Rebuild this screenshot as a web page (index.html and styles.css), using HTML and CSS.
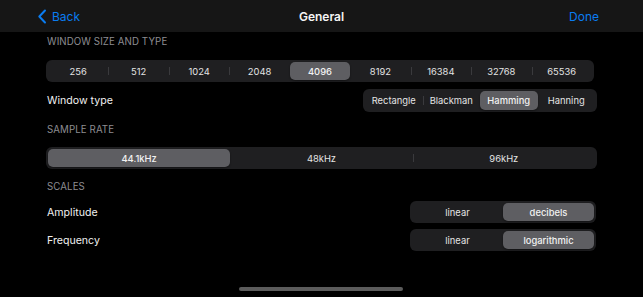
FILE: index.html
```html
<!DOCTYPE html>
<html>
<head>
<meta charset="utf-8">
<link rel="stylesheet" href="styles.css">
</head>
<body>
<div class="screen">
  <header class="nav">
    <a class="nav-back">
      <svg class="chev" width="10" height="15" viewBox="0 0 10 15"><path d="M8 1.5 L2.3 7.5 L8 13.5" fill="none" stroke="currentColor" stroke-width="2" stroke-linecap="round" stroke-linejoin="round"/></svg>
      <span>Back</span>
    </a>
    <div class="nav-title">General</div>
    <a class="nav-done">Done</a>
  </header>

  <main class="content">
    <div class="section-title first">WINDOW SIZE AND TYPE</div>
    <div class="seg-control wide-1">
      <div class="seg">256</div>
      <div class="seg">512</div>
      <div class="seg">1024</div>
      <div class="seg">2048</div>
      <div class="seg selected">4096</div>
      <div class="seg after-sel">8192</div>
      <div class="seg">16384</div>
      <div class="seg">32768</div>
      <div class="seg">65536</div>
    </div>
    <div class="row row-type">
      <div class="label">Window type</div>
      <div class="seg-control type-ctl">
        <div class="seg">Rectangle</div>
        <div class="seg">Blackman</div>
        <div class="seg selected">Hamming</div>
        <div class="seg after-sel">Hanning</div>
      </div>
    </div>

    <div class="section-title">SAMPLE RATE</div>
    <div class="seg-control">
      <div class="seg selected">44.1kHz</div>
      <div class="seg after-sel">48kHz</div>
      <div class="seg">96kHz</div>
    </div>

    <div class="section-title scales">SCALES</div>
    <div class="row row-scale">
      <div class="label">Amplitude</div>
      <div class="seg-control scale-ctl">
        <div class="seg">linear</div>
        <div class="seg selected">decibels</div>
      </div>
    </div>
    <div class="row row-scale">
      <div class="label">Frequency</div>
      <div class="seg-control scale-ctl">
        <div class="seg">linear</div>
        <div class="seg selected">logarithmic</div>
      </div>
    </div>
  </main>
  <div class="home-indicator"></div>
</div>
</body>
</html>
```

FILE: styles.css
```css
* { box-sizing: border-box; }
html, body {
  margin: 0;
  padding: 0;
  background: #000;
}
body {
  font-family: Inter, "Noto Sans", "Liberation Sans", sans-serif;
  color: #f2f2f2;
  width: 643px;
  height: 297px;
  overflow: hidden;
}
.screen {
  position: relative;
  width: 643px;
  height: 297px;
}
.nav {
  height: 32px;
  background: #161616;
  display: flex;
  align-items: center;
  justify-content: space-between;
  padding: 0 44px 0 37px;
  position: relative;
}
.nav-back {
  display: flex;
  align-items: center;
  gap: 5px;
  color: #0a7cf0;
  font-size: 12px;
}
.chev { display: block; }
.nav-title {
  position: absolute;
  left: 0;
  right: 0;
  text-align: center;
  font-size: 12px;
  font-weight: 600;
  color: #f4f4f4;
  pointer-events: none;
}
.nav-done {
  color: #0a7cf0;
  font-size: 12px;
}
.content {
  padding: 0 46px 0 46px;
}
.section-title {
  font-size: 9.7px;
  letter-spacing: 0.1px;
  color: #8d8d92;
  line-height: 16px;
  margin-top: 10px;
  margin-bottom: 9px;
  padding-left: 1px;
}
.section-title.first {
  margin-top: 2px;
  margin-bottom: 10px;
}
.section-title.scales {
  margin-bottom: 6px;
}
.seg-control {
  display: flex;
  height: 22px;
  padding: 2px;
  background: #1f1f21;
  border-radius: 6px;
}
.seg-control.wide-1 {
  margin-right: 3px;
}
.seg {
  flex: 1 1 0;
  position: relative;
  display: flex;
  align-items: center;
  justify-content: center;
  font-size: 9.4px;
  color: #e4e4e4;
  border-radius: 5px;
}
.seg + .seg::before {
  content: "";
  position: absolute;
  left: 0;
  top: 5px;
  bottom: 5px;
  width: 1px;
  background: #3a3a3d;
}
.seg.selected::before,
.seg.after-sel::before,
.scale-ctl .seg + .seg::before {
  display: none;
}
.seg.selected {
  background: #5e5e62;
  color: #f2f2f2;
  font-weight: 500;
  box-shadow: 0 1px 2px rgba(0,0,0,0.4);
}
.row {
  display: flex;
  align-items: center;
  justify-content: space-between;
}
.label {
  font-size: 10.6px;
  color: #f0f0f0;
  padding-left: 1px;
}
.row-type {
  margin-top: 7px;
  height: 23px;
}
.type-ctl {
  width: 234px;
  height: 23px;
}
.row-scale {
  margin-top: 6px;
  height: 22px;
}
.scale-ctl {
  width: 186px;
  height: 22px;
  margin-right: 1px;
}
.home-indicator {
  position: absolute;
  left: 239px;
  top: 287px;
  width: 164px;
  height: 4px;
  border-radius: 2px;
  background: #5c5c5c;
}
```
